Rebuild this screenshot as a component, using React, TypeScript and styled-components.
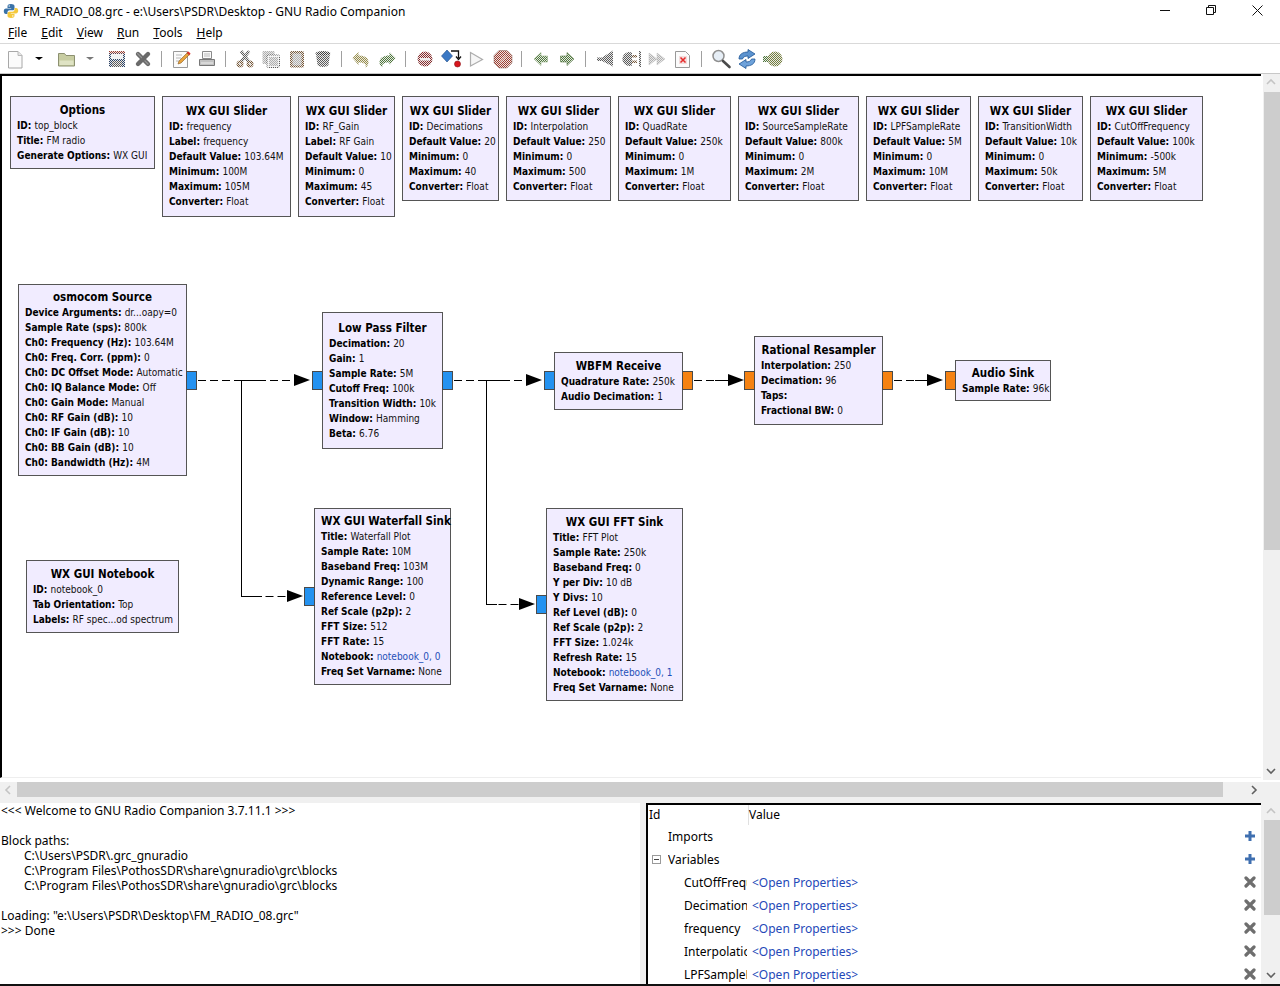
import React from "react";
import styled, { createGlobalStyle } from "styled-components";

const Global = createGlobalStyle`
  html, body { margin: 0; padding: 0; background: #fff; }
  * { box-sizing: border-box; }
`;

const UI = `"Noto Sans", "Open Sans", sans-serif`;
const BLOCK = `"DejaVu Sans Condensed", "DejaVu Sans", sans-serif`;

const Root = styled.div`
  width: 1280px; height: 986px; overflow: hidden; display: flex; flex-direction: column;
  font-family: ${UI}; font-size: 12px; color: #000; background: #fff;
`;
const TitleBar = styled.div`
  height: 22px; display: flex; align-items: center; padding-left: 3px; gap: 4px; flex: none;
`;
const TitleText = styled.div`font-size: 12px; flex: 1; white-space: nowrap;`;
const WinButtons = styled.div`display: flex; width: 138px; height: 22px;`;
const WinButton = styled.div`width: 46px; display: flex; justify-content: center; align-items: center; padding-bottom: 2px;`;
const MenuBar = styled.div`
  height: 22px; flex: none; display: flex; align-items: center; padding-left: 8px; gap: 14px;
  border-bottom: 1px solid #d9d9d9;
`;
const MenuItem = styled.span`
  font-size: 12px; line-height: 21px; &::first-letter { text-decoration: underline; }
`;
const Toolbar = styled.div`
  height: 30px; flex: none; display: flex; align-items: center; padding-left: 3px;
  border-bottom: 1px solid #c8c8c8;
`;
const ToolSlot = styled.div`width: 26px; height: 24px; flex: none; svg { display: block; margin: 0 1px; }`;
const Drop = styled.div<{ $lead: number; $color: string }>`
  width: 20px; flex: none; display: flex; justify-content: center;
  margin: 0 4px 0 ${p => p.$lead}px;
  &::before {
    content: ""; border-left: 4px solid transparent; border-right: 4px solid transparent;
    border-top: 3px solid ${p => p.$color};
  }
`;
const ToolSep = styled.div`
  width: 1px; height: 16px; background: #a0a0a0; flex: none; margin: 0 6px 0 5px;
`;
const PatternHost = styled.svg`display: block; width: 0; height: 0; flex: none;`;
const Workspace = styled.div`height: 708px; flex: none; display: flex; background: #fff;`;
const Canvas = styled.div`
  position: relative; width: 1261px; height: 704px; flex: none; overflow: hidden;
  border-left: 2px solid #000; border-top: 2px solid #000; border-bottom: 1px solid #eee; background: #fff;
`;
const WireLayer = styled.svg`position: absolute; left: -2px; top: -76px; width: 1280px; height: 800px;`;
const Block = styled.div<{ $x: number; $y: number; $w: number; $h: number }>`
  position: absolute; left: ${p => p.$x - 2}px; top: ${p => p.$y - 76}px; width: ${p => p.$w}px; height: ${p => p.$h}px;
  background: #f1ecff; border: 1px solid #555;
  display: flex; flex-direction: column; justify-content: center; padding: 0 0 0 6px;
  font-family: ${BLOCK}; font-size: 10px; line-height: 15px; white-space: nowrap;
`;
const BlockTitle = styled.div`
  font-weight: 700; font-size: 11.5px; text-align: center; padding-right: 6px; margin-left: -6px; padding-left: 6px;
`;
const Param = styled.div`font-weight: 700;`;
const ParamValue = styled.span<{ $link?: boolean }>`font-weight: 400; color: ${p => (p.$link ? "#1f4fb8" : "#111")};`;
const Port = styled.div<{ $side: "in" | "out"; $y: number; $color: string }>`
  position: absolute; ${p => (p.$side === "in" ? "left: -11px;" : "right: -11px;")}
  top: ${p => p.$y - 1}px; width: 11px; height: 19px;
  background: ${p => p.$color}; border: 1px solid #4a4a4a;
`;
const VScroll = styled.div<{ $h: number; $thumbTop: number; $thumbH: number }>`
  position: relative; width: 17px; height: ${p => p.$h}px; background: #f0f0f0; flex: none;
  &::after {
    content: ""; position: absolute; left: 1px; right: 0; top: ${p => p.$thumbTop}px; height: ${p => p.$thumbH}px; background: #cdcdcd;
  }
`;
const ScrollGap = styled.div`width: 2px; flex: none;`;
const ArrowGlyph = styled.svg<{ $x: number; $y: number }>`
  position: absolute; left: ${p => p.$x}px; top: ${p => p.$y}px; z-index: 1;
`;
const HScroll = styled.div`
  position: relative; height: 21px; flex: none; background: #f0f0f0;
  &::after {
    content: ""; position: absolute; left: 17px; width: 1206px; top: 0; height: 15px; background: #cdcdcd;
  }
`;
const Bottom = styled.div`flex: 1; display: flex; background: #f0f0f0; border-bottom: 2px solid #111; min-height: 0;`;
const Console = styled.div`
  width: 640px; flex: none; background: #fff; padding-top: 0; font-size: 12px; line-height: 15px; white-space: pre;
  height: 181px; overflow: hidden; padding-left: 1px;
`;
const ConsoleLine = styled.div<{ $indent?: boolean }>`height: 15px; padding-left: ${p => (p.$indent ? 23 : 0)}px;`;
const Tree = styled.div`
  width: 615px; flex: none; margin-left: 6px; background: #fff; border-left: 2px solid #000; border-top: 2px solid #000;
  overflow: hidden; font-size: 12px;
`;
const TreeHead = styled.div`height: 20px; display: flex; align-items: center; padding-left: 1px;`;
const HeadCell = styled.div`
  width: 99px; height: 20px; line-height: 20px; flex: none;
  & + & { border-left: 1px solid #e0e0e0; width: auto; padding-left: 0; }
`;
const TreeRow = styled.div`height: 23px; display: flex; align-items: center; position: relative;`;
const Expander = styled.div`
  width: 20px; flex: none; display: flex; justify-content: flex-start; padding-left: 4px;
`;
const MinusBox = styled.div`
  width: 9px; height: 9px; border: 1px solid #9a9a9a; position: relative;
  &::after { content: ""; position: absolute; left: 1px; right: 1px; top: 3px; height: 1px; background: #444; }
`;
const RowName = styled.div<{ $child?: boolean }>`
  width: ${p => (p.$child ? 63 : 300)}px; margin-left: ${p => (p.$child ? 16 : 0)}px; overflow: hidden; white-space: nowrap; flex: none;
`;
const RowValue = styled.div`margin-left: 5px; color: #2448b8; white-space: nowrap; flex: 1;`;
const RowIcon = styled.svg`position: absolute; left: 596px; top: 5px;`;
const Spacer = styled.div`flex: 1;`;

const sliders = [
  { x: 162, w: 129, h: 121, id: "frequency", label: "frequency", def: "103.64M", min: "100M", max: "105M" },
  { x: 298, w: 97, h: 121, id: "RF_Gain", label: "RF Gain", def: "10", min: "0", max: "45" },
  { x: 402, w: 97, h: 105, id: "Decimations", def: "20", min: "0", max: "40" },
  { x: 506, w: 105, h: 105, id: "Interpolation", def: "250", min: "0", max: "500" },
  { x: 618, w: 113, h: 105, id: "QuadRate", def: "250k", min: "0", max: "1M" },
  { x: 738, w: 121, h: 105, id: "SourceSampleRate", def: "800k", min: "0", max: "2M" },
  { x: 866, w: 105, h: 105, id: "LPFSampleRate", def: "5M", min: "0", max: "10M" },
  { x: 978, w: 105, h: 105, id: "TransitionWidth", def: "10k", min: "0", max: "50k" },
  { x: 1090, w: 113, h: 105, id: "CutOffFrequency", def: "100k", min: "-500k", max: "5M" },
];

type BlockDef = {
  title: string; x: number; y: number; w: number; h: number;
  rows: [string, string, boolean?][];
  ports?: { side: "in" | "out"; y: number; color: string }[];
};
const BLUE = "#2492f0";
const ORANGE = "#f58212";

const blocks: BlockDef[] = [
  { title: "Options", x: 10, y: 96, w: 145, h: 73, rows: [["ID", "top_block"], ["Title", "FM radio"], ["Generate Options", "WX GUI"]] },
  ...sliders.map(s => ({
    title: "WX GUI Slider", x: s.x, y: 96, w: s.w, h: s.h,
    rows: [
      ["ID", s.id],
      ...(s.label ? [["Label", s.label]] : []),
      ["Default Value", s.def], ["Minimum", s.min], ["Maximum", s.max], ["Converter", "Float"],
    ] as [string, string][],
  })),
  {
    title: "osmocom Source", x: 18, y: 284, w: 169, h: 192,
    rows: [["Device Arguments", "dr...oapy=0"], ["Sample Rate (sps)", "800k"], ["Ch0: Frequency (Hz)", "103.64M"], ["Ch0: Freq. Corr. (ppm)", "0"], ["Ch0: DC Offset Mode", "Automatic"], ["Ch0: IQ Balance Mode", "Off"], ["Ch0: Gain Mode", "Manual"], ["Ch0: RF Gain (dB)", "10"], ["Ch0: IF Gain (dB)", "10"], ["Ch0: BB Gain (dB)", "10"], ["Ch0: Bandwidth (Hz)", "4M"]],
    ports: [{ side: "out", y: 87, color: BLUE }],
  },
  {
    title: "Low Pass Filter", x: 322, y: 312, w: 121, h: 137,
    rows: [["Decimation", "20"], ["Gain", "1"], ["Sample Rate", "5M"], ["Cutoff Freq", "100k"], ["Transition Width", "10k"], ["Window", "Hamming"], ["Beta", "6.76"]],
    ports: [{ side: "in", y: 59, color: BLUE }, { side: "out", y: 59, color: BLUE }],
  },
  {
    title: "WBFM Receive", x: 554, y: 352, w: 129, h: 58,
    rows: [["Quadrature Rate", "250k"], ["Audio Decimation", "1"]],
    ports: [{ side: "in", y: 19, color: BLUE }, { side: "out", y: 19, color: ORANGE }],
  },
  {
    title: "Rational Resampler", x: 754, y: 336, w: 129, h: 89,
    rows: [["Interpolation", "250"], ["Decimation", "96"], ["Taps", ""], ["Fractional BW", "0"]],
    ports: [{ side: "in", y: 35, color: ORANGE }, { side: "out", y: 35, color: ORANGE }],
  },
  {
    title: "Audio Sink", x: 955, y: 360, w: 96, h: 41,
    rows: [["Sample Rate", "96k"]],
    ports: [{ side: "in", y: 11, color: ORANGE }],
  },
  { title: "WX GUI Notebook", x: 26, y: 560, w: 153, h: 73, rows: [["ID", "notebook_0"], ["Tab Orientation", "Top"], ["Labels", "RF spec...od spectrum"]] },
  {
    title: "WX GUI Waterfall Sink", x: 314, y: 508, w: 137, h: 177,
    rows: [["Title", "Waterfall Plot"], ["Sample Rate", "10M"], ["Baseband Freq", "103M"], ["Dynamic Range", "100"], ["Reference Level", "0"], ["Ref Scale (p2p)", "2"], ["FFT Size", "512"], ["FFT Rate", "15"], ["Notebook", "notebook_0, 0", true], ["Freq Set Varname", "None"]],
    ports: [{ side: "in", y: 79, color: BLUE }],
  },
  {
    title: "WX GUI FFT Sink", x: 546, y: 508, w: 137, h: 193,
    rows: [["Title", "FFT Plot"], ["Sample Rate", "250k"], ["Baseband Freq", "0"], ["Y per Div", "10 dB"], ["Y Divs", "10"], ["Ref Level (dB)", "0"], ["Ref Scale (p2p)", "2"], ["FFT Size", "1.024k"], ["Refresh Rate", "15"], ["Notebook", "notebook_0, 1", true], ["Freq Set Varname", "None"]],
    ports: [{ side: "in", y: 87, color: BLUE }],
  },
];

const dithers: [string, string][] = [
  ["dGrey", "#5c5c5c"], ["dLight", "#b0b0b0"], ["dBrown", "#7b5a38"], ["dDark", "#3f3f3f"], ["dNavy", "#2c4468"],
  ["dKhaki", "#9a8f45"], ["dGreen", "#4f7a3a"], ["dRed", "#8a2a2a"], ["dOlive", "#76803c"], ["dRust", "#a33b2c"],
];

const Icon = ({ children }: { children: React.ReactNode }) => (
  <ToolSlot><svg width="24" height="24" viewBox="0 0 24 24">{children}</svg></ToolSlot>
);

const Arrow = ({ dir, fill, stroke }: { dir: 1 | -1; fill: string; stroke: string }) => (
  <path transform={dir < 0 ? "translate(24 0) scale(-1 1)" : undefined} d="M5.5 9h6.5V5.5l7 6.5-7 6.5V15H5.5z" fill={fill} stroke={stroke} strokeWidth="0.6" />
);

const icons: Record<string, React.ReactNode> = {
  new: <><path d="M4.5 4.5h9.5l4 4v12.5H4.5z" fill="#fbfbfb" stroke="#a8a8a8" /><path d="M14 4.5v4h4" fill="#e6e6e6" stroke="#b8b8b8" /></>,
  open: <><path d="M4.5 6.5h6l1.5 2h8.5v10.5h-16z" fill="#c8cda2" stroke="#8c9070" /><path d="M5.5 13.5h14v4.5h-14z" fill="#dfe3c4" /></>,
  save: <><rect x="4" y="4" width="16" height="16" fill="url(#dNavy)" /><rect x="4" y="4" width="16" height="2.5" fill="url(#dRust)" /><rect x="6" y="7" width="12" height="5" fill="#f2f2f2" /><rect x="7" y="14" width="10" height="6" fill="url(#dGrey)" /></>,
  close: <><path d="M7 7l10 10M17 7L7 17" stroke="#6a6a6a" strokeWidth="4.4" strokeLinecap="round" /><path d="M6.5 6.5l4 4M14 14l3 3" stroke="#959595" strokeWidth="1.2" strokeLinecap="round" /></>,
  props: <><path d="M4.5 4.5h14v16h-14z" fill="#fbfbfb" stroke="#9a9a9a" /><path d="M7 8h6M7 11h5M7 14h3" stroke="#b8b8b8" /><path d="M9 17l1-3 8-8 2 2-8 8z" fill="#e8a33c" stroke="#8a5a20" strokeWidth="0.6" /><path d="M17.5 5.5l3 3 1-2-2-2z" fill="#d8352a" /></>,
  print: <><path d="M7.5 4.5h9v7h-9z" fill="#fafafa" stroke="#8a8a8a" /><path d="M9 7h6M9 9h6" stroke="#bbb" /><path d="M4.5 12.5h15v6h-15z" fill="#c2c2c2" stroke="#777" /><path d="M6 16h12" stroke="#eee" /></>,
  cut: <><path d="M8 4l8 11M16 4L8 15" stroke="url(#dGrey)" strokeWidth="3" /><circle cx="7" cy="17" r="3.5" fill="url(#dBrown)" /><circle cx="17" cy="17" r="3.5" fill="url(#dBrown)" /><circle cx="7" cy="17" r="1" fill="#eee" /><circle cx="17" cy="17" r="1" fill="#eee" /></>,
  copy: <><rect x="3.5" y="4" width="12" height="13" rx="1" fill="url(#dLight)" /><rect x="8" y="8" width="12.5" height="12.5" rx="1.5" fill="#f4f4f4" stroke="url(#dGrey)" /><rect x="10" y="10" width="9" height="9" fill="url(#dLight)" /></>,
  paste: <><rect x="5" y="4" width="14" height="16.5" rx="1.5" fill="url(#dBrown)" /><rect x="7.5" y="6.5" width="9" height="12" fill="url(#dLight)" /></>,
  trash: <><ellipse cx="12" cy="6.5" rx="7.5" ry="2.5" fill="url(#dDark)" /><path d="M5 7l1.5 11c1.5 2.5 9.5 2.5 11 0L19 7c-2 3-12 3-14 0z" fill="url(#dGrey)" /></>,
  undo: <path d="M3.5 11l6-6v3.5c6 0 10 2 10 7 0 2-1.5 4.5-3 5 1-3-1-5.500-7-5v2.500z" fill="url(#dKhaki)" />,
  redo: <path d="M20.500 11l-6-6v3.500c-6 0-10 2-10 7 0 2 1.500 4.500 3 5-1-3 1-5.500 7-5v2.500z" fill="url(#dGreen)" />,
  stopEntry: <><circle cx="12" cy="12" r="7.5" fill="url(#dRed)" /><rect x="7" y="11" width="10" height="2.5" fill="#eee" /></>,
  error: <><path d="M8 3l5.500 6-5.500 6-5.500-6z" fill="#3b78c4" stroke="#1d4a86" strokeWidth="0.6" /><path d="M12 4h7.500v7M17 9.500l2.500 3 2.500-3" fill="none" stroke="#111" strokeWidth="1.3" /><circle cx="18.500" cy="17" r="3" fill="#d8161c" stroke="#8a1015" strokeWidth="0.6" /></>,
  play: <path d="M5.500 5.500l12 7-12 6.500z" fill="#f6f6f6" stroke="#adadad" strokeWidth="1.2" />,
  stop: <><path d="M8 3.500h8l5 5v7.500l-5 5H8l-5-5V8.500z" fill="url(#dRust)" stroke="#8a6a60" strokeWidth="0.5" /><path d="M9 15l6-6" stroke="#e8cfc8" strokeWidth="1.200" /></>,
  back: <Arrow dir={-1} fill="url(#dGreen)" stroke="#9ab58c" />,
  forward: <Arrow dir={1} fill="url(#dGreen)" stroke="#5a7a48" />,
  speaker: <path d="M4 10.500h5L20 3.500v16L9 14H4z" fill="url(#dGrey)" />,
  plug: <><path d="M13 5.500a7 7 0 1 0 0 13z" fill="url(#dGrey)" /><path d="M13 8h5v2.500h-5zM13 13.500h5V16h-5z" fill="url(#dBrown)" /><rect x="20" y="4" width="2" height="16" fill="url(#dGrey)" /></>,
  ff: <path d="M4 6l8 6-8 6zM12 6l8 6-8 6z" fill="url(#dLight)" stroke="#c0c0c0" strokeWidth="0.5" />,
  docx: <><path d="M4.500 4.500h10l4 4v12h-14z" fill="#fbfbfb" stroke="#999" /><rect x="8" y="9" width="8" height="8" fill="#f3dcdc" /><path d="M9.500 10.500l5 5M14.500 10.500l-5 5" stroke="#e52a2a" strokeWidth="1.500" /></>,
  search: <><circle cx="9.500" cy="9" r="5.500" fill="#e6eef6" stroke="#8f8f8f" strokeWidth="1.500" /><path d="M14 14l6.500 6" stroke="#4a4a4a" strokeWidth="2.600" strokeLinecap="round" /></>,
  refresh: <><path d="M4 11c0-5 4-7 9-7V1.500l7 4.500-7 4.500V8c-3 0-5 1-5.500 3z" fill="#5c93cf" stroke="#1e5596" strokeWidth="0.8" transform="translate(0 1)" /><path d="M20 13c0 5-4 7-9 7v2.500l-7-4.500 7-4.500V16c3 0 5-1 5.500-3z" fill="#6ea2da" stroke="#1e5596" strokeWidth="0.8" transform="translate(0 -1)" /></>,
  zoomArrow: <><path d="M2 9h7V7l3-1v12l-3-1v-2H2z" fill="url(#dGreen)" /><circle cx="14" cy="12" r="7.500" fill="url(#dOlive)" /></>,
};

const Sep = () => <ToolSep />;
const toolbar: React.ReactNode[] = [
  <Icon key="new">{icons.new}</Icon>,
  <Drop key="d1" $lead={0} $color="#000" />,
  <Icon key="open">{icons.open}</Icon>,
  <Drop key="d2" $lead={1} $color="#777" />,
  ...["save", "close", "|", "props", "print", "|", "cut", "copy", "paste", "trash", "|", "undo", "redo", "|", "stopEntry", "error", "play", "stop", "|", "back", "forward", "|", "speaker", "plug", "ff", "docx", "|", "search", "refresh", "zoomArrow"].map((n, i) =>
    n === "|" ? <Sep key={`s${i}`} /> : <Icon key={n}>{icons[n]}</Icon>
  ),
];

const Head = ({ x, tip }: { x: number; tip: number }) => (
  <polygon points={`${x},${tip - 6} ${x + 16},${tip} ${x},${tip + 6}`} fill="#000" />
);

const Wires = () => (
  <WireLayer>
    <g fill="none" stroke="#000" strokeWidth="1">
      <path d="M198 380.500H296M454 380.500H528M694 380.500H730M894 380.500H929M241.500 596.500H289M486.500 604.500H521" strokeDasharray="8 4" />
      <path d="M241.500 380.500H262M486.500 380.500H505M241.500 380V597M486.500 380V605M715 380.500H730M915 380.500H929M241.500 596.500H262M486.500 604.500H497" />
    </g>
    <Head x={294} tip={380} />
    <Head x={526} tip={380} />
    <Head x={728} tip={380} />
    <Head x={927} tip={380} />
    <Head x={287} tip={596} />
    <Head x={519} tip={604} />
  </WireLayer>
);

const Chevron = ({ dir, color, x, y }: { dir: "up" | "down" | "left" | "right"; color: string; x: number; y: number }) => {
  const d = { up: "M1 6l4-4 4 4", down: "M1 3l4 4 4-4", left: "M7 1L3 5l4 4", right: "M3 1l4 4-4 4" }[dir];
  return (
    <ArrowGlyph $x={x} $y={y} width="10" height="10" viewBox="0 0 10 10">
      <path d={d} fill="none" stroke={color} strokeWidth="1.600" />
    </ArrowGlyph>
  );
};

const consoleLines: [string, boolean?][] = [
  ["<<< Welcome to GNU Radio Companion 3.7.11.1 >>>"], [""], ["Block paths:"],
  ["C:\\Users\\PSDR\\.grc_gnuradio", true],
  ["C:\\Program Files\\PothosSDR\\share\\gnuradio\\grc\\blocks", true],
  ["C:\\Program Files\\PothosSDR\\share\\gnuradio\\grc\\blocks", true],
  [""], ["Loading: \"e:\\Users\\PSDR\\Desktop\\FM_RADIO_08.grc\""], [">>> Done"],
];

const PlusIcon = () => (
  <RowIcon width="12" height="12" viewBox="0 0 12 12">
    <path d="M6 1v10M1 6h10" stroke="#3f6fb0" strokeWidth="3" />
  </RowIcon>
);
const CrossIcon = () => (
  <RowIcon width="12" height="12" viewBox="0 0 12 12">
    <path d="M2 2l8 8M10 2l-8 8" stroke="#6e6e6e" strokeWidth="3.200" strokeLinecap="round" />
  </RowIcon>
);

const vars = ["CutOffFrequency", "Decimations", "frequency", "Interpolation", "LPFSampleRate"];

export default function App() {
  return (
    <Root>
      <Global />
      <TitleBar>
        <svg width="16" height="16" viewBox="0 0 16 16">
          <path d="M8 1C5 1 4.500 2 4.500 3.500V5H8.200v.6H3C1.500 5.600.8 6.800.8 8.200S1.500 11 3 11h1.500V9.200C4.500 8 5.500 7.200 6.700 7.200h3c1 0 1.800-.8 1.800-1.800V3C11.500 1.800 10 1 8 1z" fill="#3a72a8" />
          <path d="M8 15c3 0 3.500-1 3.500-2.500V11H7.800v-.6H13c1.500 0 2.200-1.200 2.200-2.600S14.500 5 13 5h-1.500v1.800c0 1.200-1 2-2.200 2h-3c-1 0-1.800.8-1.800 1.800V13C4.500 14.200 6 15 8 15z" fill="#f5c93d" />
          <circle cx="6.200" cy="3" r="0.700" fill="#fff" /><circle cx="9.800" cy="13" r="0.700" fill="#fff" />
        </svg>
        <TitleText>FM_RADIO_08.grc - e:\Users\PSDR\Desktop - GNU Radio Companion</TitleText>
        <WinButtons>
          <WinButton><svg width="10" height="10" viewBox="0 0 10 10"><path d="M0 5.500h10" stroke="#111" /></svg></WinButton>
          <WinButton><svg width="10" height="10" viewBox="0 0 10 10"><path d="M2.500 2.500V.5h7v7h-2M.5 2.500h7v7h-7z" fill="none" stroke="#111" /></svg></WinButton>
          <WinButton><svg width="11" height="11" viewBox="0 0 11 11"><path d="M.5.500l10 10M10.500.500l-10 10" stroke="#111" /></svg></WinButton>
        </WinButtons>
      </TitleBar>
      <MenuBar>
        {["File", "Edit", "View", "Run", "Tools", "Help"].map(m => <MenuItem key={m}>{m}</MenuItem>)}
      </MenuBar>
      <Toolbar>
        <PatternHost>
          <defs>
            {dithers.map(([id, c]) => (
              <pattern key={id} id={id} width="2" height="2" patternUnits="userSpaceOnUse">
                <rect width="2" height="2" fill="#e8e8e8" />
                <rect width="1" height="1" fill={c} />
                <rect x="1" y="1" width="1" height="1" fill={c} />
              </pattern>
            ))}
          </defs>
        </PatternHost>
        {toolbar}
      </Toolbar>
      <Workspace>
        <Canvas>
          <Wires />
          {blocks.map((b, i) => (
            <Block key={i} $x={b.x} $y={b.y} $w={b.w} $h={b.h}>
              <BlockTitle>{b.title}</BlockTitle>
              {b.rows.map(([k, v, link]) => (
                <Param key={k}>{k}: <ParamValue $link={link}>{v}</ParamValue></Param>
              ))}
              {b.ports?.map(p => <Port key={p.side} $side={p.side} $y={p.y} $color={p.color} />)}
            </Block>
          ))}
        </Canvas>
        <ScrollGap />
        <VScroll $h={706} $thumbTop={18} $thumbH={458}>
          <Chevron dir="up" color="#c4c4c4" x={3} y={4} />
          <Chevron dir="down" color="#606060" x={3} y={692} />
        </VScroll>
      </Workspace>
      <HScroll>
        <Chevron dir="left" color="#c4c4c4" x={3} y={3} />
        <Chevron dir="right" color="#606060" x={1249} y={3} />
      </HScroll>
      <Bottom>
        <Console>
          {consoleLines.map(([t, indent], i) => <ConsoleLine key={i} $indent={indent}>{t}</ConsoleLine>)}
        </Console>
        <Tree>
          <TreeHead><HeadCell>Id</HeadCell><HeadCell>Value</HeadCell></TreeHead>
          <TreeRow><Expander /><RowName>Imports</RowName><PlusIcon /></TreeRow>
          <TreeRow><Expander><MinusBox /></Expander><RowName>Variables</RowName><PlusIcon /></TreeRow>
          {vars.map(v => (
            <TreeRow key={v}>
              <Expander /><RowName $child>{v}</RowName>
              <RowValue>{"<Open Properties>"}</RowValue>
              <CrossIcon />
            </TreeRow>
          ))}
        </Tree>
        <Spacer />
        <VScroll $h={181} $thumbTop={17} $thumbH={95}>
          <Chevron dir="up" color="#c4c4c4" x={3} y={4} />
          <Chevron dir="down" color="#606060" x={3} y={167} />
        </VScroll>
      </Bottom>
    </Root>
  );
}
